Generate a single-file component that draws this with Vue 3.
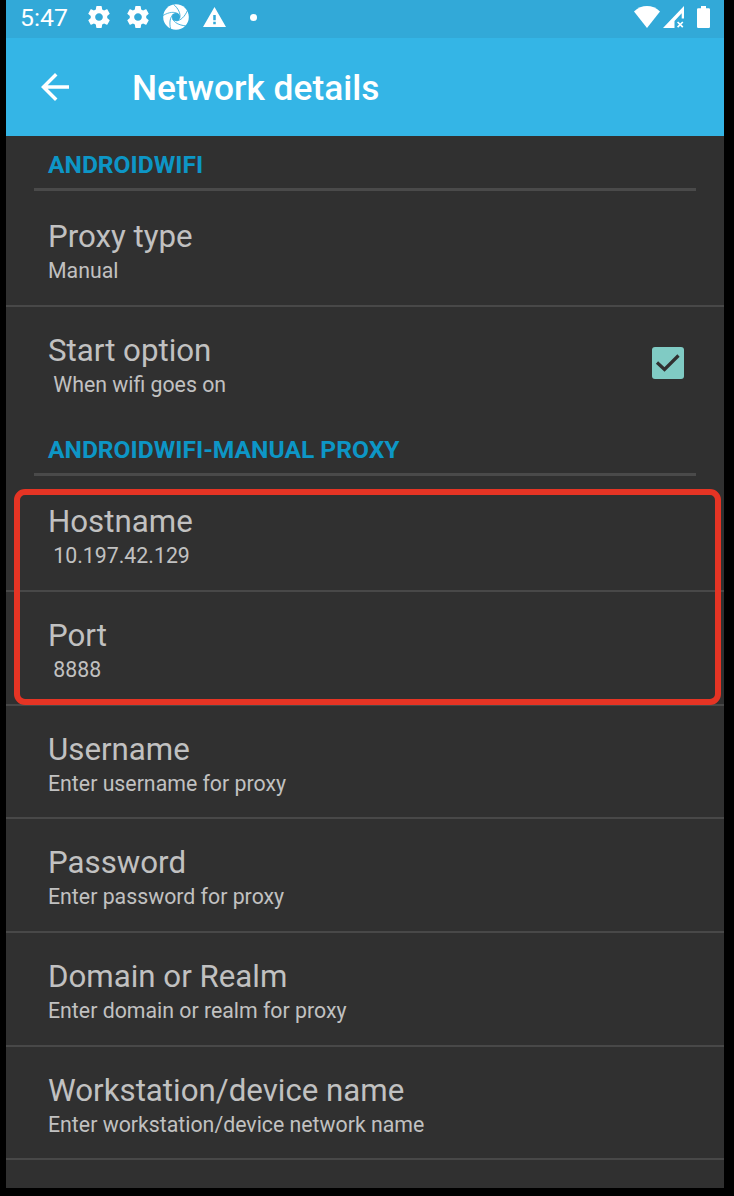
<script setup>
const sections = [
  {
    title: 'ANDROIDWIFI',
    rows: [
      { title: 'Proxy type', summary: 'Manual', divider: true },
      { title: 'Start option', summary: ' When wifi goes on', checked: true },
    ],
  },
  {
    title: 'ANDROIDWIFI-MANUAL PROXY',
    marked: true,
    rows: [
      { title: 'Hostname', summary: ' 10.197.42.129', divider: true },
      { title: 'Port', summary: ' 8888', divider: true },
      { title: 'Username', summary: 'Enter username for proxy', divider: true },
      { title: 'Password', summary: 'Enter password for proxy', divider: true },
      { title: 'Domain or Realm', summary: 'Enter domain or realm for proxy', divider: true },
      { title: 'Workstation/device name', summary: 'Enter workstation/device network name', divider: true },
    ],
  },
]
const gear = 'M19.43 12.98c.04-.32.07-.64.07-.98s-.03-.66-.07-.98l2.11-1.65c.19-.15.24-.42.12-.64l-2-3.46c-.12-.22-.39-.3-.61-.22l-2.49 1c-.52-.4-1.08-.73-1.69-.98l-.38-2.65C14.46 2.18 14.25 2 14 2h-4c-.25 0-.46.18-.49.42l-.38 2.65c-.61.25-1.17.59-1.69.98l-2.49-1c-.23-.09-.49 0-.61.22l-2 3.46c-.13.22-.07.49.12.64l2.11 1.65c-.04.32-.07.65-.07.98s.03.66.07.98l-2.11 1.65c-.19.15-.24.42-.12.64l2 3.46c.12.22.39.3.61.22l2.49-1c.52.4 1.08.73 1.69.98l.38 2.65c.03.24.24.42.49.42h4c.25 0 .46-.18.49-.42l.38-2.65c.61-.25 1.17-.59 1.69-.98l2.49 1c.23.09.49 0 .61-.22l2-3.46c.12-.22.07-.49-.12-.64l-2.11-1.65zM12 15.5c-1.93 0-3.5-1.57-3.5-3.5s1.57-3.5 3.5-3.5 3.5 1.57 3.5 3.5-1.57 3.5-3.5 3.5z'
</script>

<template>
  <div class="frame">
    <main class="screen">
      <div class="status">
        <span class="clock">5:47</span>
        <svg class="gear" viewBox="2 2 20 20"><path :d="gear" /></svg>
        <svg class="gear second" viewBox="2 2 20 20"><path :d="gear" /></svg>
        <svg class="swirl" viewBox="0 0 26 26">
          <circle cx="13" cy="13" r="12.8" fill="#fff" />
          <circle cx="13" cy="13" r="4" fill="#32a9d8" />
          <g fill="none" stroke="#32a9d8" stroke-width="0.8">
            <path v-for="n in 5" :key="n" d="M15 9.600C11 7.500 6 8 0 11.500" :transform="`rotate(${n * 72} 13 13)`" />
          </g>
        </svg>
        <svg class="warn" viewBox="1 2 22 19"><path d="M1 21h22L12 2 1 21zm12.200-2.500h-2.400v-2.400h2.400v2.400zm0-4h-2.400V9.500h2.400v5z" /></svg>
        <i class="dot"></i>
        <svg class="wifi" viewBox="0 0 26 22"><path d="M0 5.4C7.6-1.8 18.4-1.8 26 5.4L13 22z" /></svg>
        <svg class="signal" viewBox="0 0 22 22">
          <path fill-rule="evenodd" d="M0 22 21 0v12.5h-2.3V7.3L11.5 15v7z" />
          <path d="m14.6 16 5.2 5.2m0-5.2-5.2 5.2" stroke="#fff" stroke-width="1.7" />
        </svg>
        <svg class="battery" viewBox="0 0 13 22"><path d="M4 0h5v2.2h2.8q1.2 0 1.2 1.2v17.4q0 1.2-1.2 1.2H1.2Q0 22 0 20.800V3.400Q0 2.200 1.200 2.200H4z" /></svg>
      </div>
      <header class="toolbar">
        <svg class="back" viewBox="4 4 16 16"><path d="M20 11H7.830l5.590-5.590L12 4l-8 8 8 8 1.410-1.410L7.830 13H20v-2z" /></svg>
        <h1>Network details</h1>
      </header>
      <section v-for="s in sections" :key="s.title" class="group">
        <h2>{{ s.title }}</h2>
        <div v-for="r in s.rows" :key="r.title" class="row" :class="{ divided: r.divider }">
          <div class="labels">
            <div class="title">{{ r.title }}</div>
            <div class="summary">{{ r.summary }}</div>
          </div>
          <svg v-if="r.checked" class="check" viewBox="0 0 32 32">
            <rect width="32" height="32" rx="3" fill="#80cbc4" />
            <path d="m5 15.500 7.500 7L26.500 8.500" fill="none" stroke="#303030" stroke-width="3.200" />
          </svg>
        </div>
        <div v-if="s.marked" class="marker"></div>
      </section>
    </main>
  </div>
</template>

<style>
body { background: #000; }
</style>

<style scoped>
.frame {
  box-sizing: border-box;
  width: 734px;
  height: 1196px;
  padding: 0 10px 8px 6px;
  background: #000;
  font-family: Roboto, sans-serif;
}
.screen { height: 1188px; overflow: hidden; background: #303030; }
svg { display: block; flex: none; fill: #fff; }
.status {
  box-sizing: border-box;
  display: flex;
  align-items: center;
  height: 38px;
  padding: 0 14px 4px 14px;
  background: #32a9d8;
}
.clock { width: 68px; padding-top: 2px; font-size: 24.800px; line-height: 34px; color: #fff; }
.gear { width: 22px; height: 22px; }
.second { margin-left: 17px; }
.swirl { width: 26px; height: 26px; margin-left: 14px; }
.warn { width: 23px; height: 20px; margin-left: 14px; }
.dot { width: 7px; height: 7px; margin-left: 24px; border-radius: 50%; background: #fff; }
.wifi { width: 26px; height: 22px; margin-left: auto; }
.signal { width: 22px; height: 22px; margin-left: 3px; }
.battery { width: 13px; height: 22px; margin-left: 12px; }
.toolbar {
  box-sizing: border-box;
  display: flex;
  align-items: center;
  height: 97.500px;
  padding-left: 35px;
  background: #34b5e6;
}
.back { width: 28px; height: 28px; }
h1 { margin: 2px 0 0 63px; font-size: 35.300px; line-height: 42px; font-weight: 500; color: #fff; }
.group { position: relative; }
h2 {
  box-sizing: border-box;
  height: 55.500px;
  margin: 0 28px 2.200px;
  padding: 14.300px 14px 0;
  border-bottom: 3px solid #4a4a4a;
  font-size: 24.600px;
  line-height: 30px;
  font-weight: 700;
  color: #0d96c6;
  white-space: nowrap;
}
.row {
  box-sizing: border-box;
  display: flex;
  align-items: flex-start;
  justify-content: space-between;
  height: 113.700px;
  padding: 24px 40px 0 42px;
}
.divided { border-bottom: 2px solid #484848; }
.labels { color: #c1c1c1; white-space: pre; }
.title { font-size: 31.250px; line-height: 40px; }
.summary { font-size: 21.300px; line-height: 28px; }
.check { width: 32px; height: 32px; margin-top: 16px; }
.marker {
  box-sizing: border-box;
  position: absolute;
  top: 68.300px;
  left: 8px;
  width: 707px;
  height: 216px;
  border: 6px solid #e53424;
  border-radius: 11px;
}
</style>
